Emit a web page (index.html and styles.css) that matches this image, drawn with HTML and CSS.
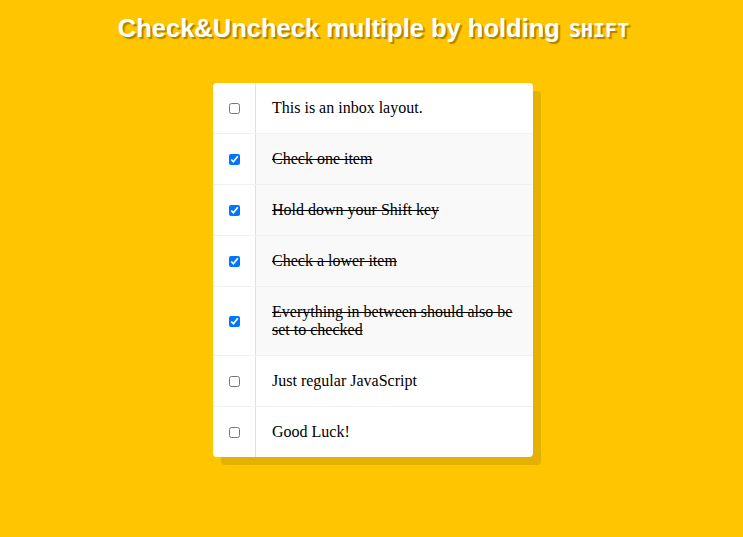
FILE: index.html
```html
<!DOCTYPE html>
<html lang="en">
<head>
<meta charset="UTF-8">
<title>Hold Shift to Check Multiple Checkboxes</title>
<link rel="stylesheet" href="styles.css">
</head>
<body>
  <h1 class="title">Check&amp;Uncheck multiple by holding <code class="key">SHIFT</code></h1>
  <div class="wrap">
    <div class="inbox">
      <div class="item">
        <input type="checkbox" class="check">
        <p class="text">This is an inbox layout.</p>
      </div>
      <div class="item">
        <input type="checkbox" class="check" checked>
        <p class="text">Check one item</p>
      </div>
      <div class="item">
        <input type="checkbox" class="check" checked>
        <p class="text">Hold down your Shift key</p>
      </div>
      <div class="item">
        <input type="checkbox" class="check" checked>
        <p class="text">Check a lower item</p>
      </div>
      <div class="item">
        <input type="checkbox" class="check" checked>
        <p class="text">Everything in between should also be set to checked</p>
      </div>
      <div class="item">
        <input type="checkbox" class="check">
        <p class="text">Just regular JavaScript</p>
      </div>
      <div class="item">
        <input type="checkbox" class="check">
        <p class="text">Good Luck!</p>
      </div>
    </div>
  </div>
</body>
</html>
```
FILE: styles.css
```css
html {
  background: #ffc600;
}

body {
  margin: 0;
  padding: 13px 8px 8px;
  font-family: "Liberation Serif", serif;
  font-size: 16px;
}

.title {
  margin: 0 0 38px;
  padding-left: 4px;
  text-align: center;
  color: #ffffff;
  font-family: "Liberation Sans", Arial, sans-serif;
  font-size: 25.5px;
  font-weight: bold;
  line-height: 30px;
  text-shadow: 2px 2px 1px rgba(110, 80, 0, 0.55);
}

.key {
  font-family: "DejaVu Sans Mono", monospace;
  font-size: 20px;
  font-weight: bold;
  margin-left: 2px;
}

.wrap {
  display: flex;
  justify-content: center;
  padding-left: 3px;
}

.inbox {
  width: 320px;
  background: #ffffff;
  border-radius: 4px;
  box-shadow: 8px 8px 0 rgba(0, 0, 0, 0.1);
}

.item {
  display: flex;
  align-items: center;
  border-bottom: 1px solid #f1f1f1;
}

.item:last-child {
  border-bottom: 0;
}

.check {
  width: 11px;
  height: 11px;
  margin: 0 15px 0 16px;
  flex: none;
}

.text {
  flex: 1;
  margin: 0;
  padding: 16px;
  border-left: 1px solid #d1e2ff;
  color: #000000;
  line-height: 18px;
}

.check:checked + .text {
  background: #f9f9f9;
  text-decoration: line-through;
}
```
